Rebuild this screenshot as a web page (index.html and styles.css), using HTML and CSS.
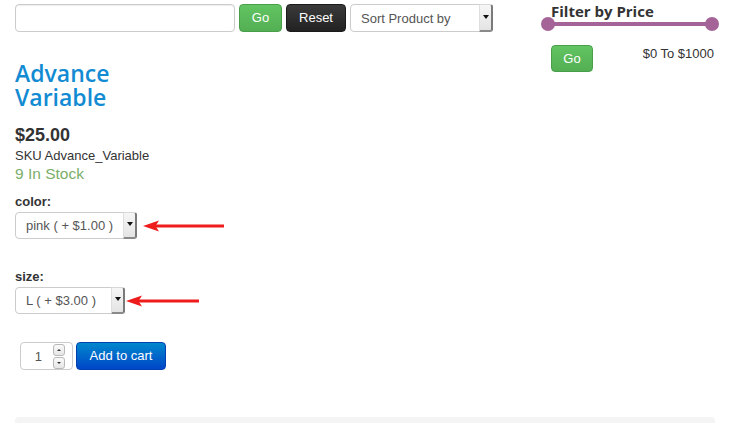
FILE: index.html
```html
<!DOCTYPE html>
<html>
<head>
<meta charset="utf-8">
<title>Advance Variable</title>
<link rel="stylesheet" href="styles.css">
</head>
<body>
<div class="page">
  <div class="main">
    <div class="toolbar">
      <div class="text-input"></div>
      <button class="btn btn-success btn-go">Go</button>
      <button class="btn btn-inverse btn-reset">Reset</button>
      <div class="select select-sort">
        <span class="select-text">Sort Product by</span>
        <span class="select-btn"><span class="caret"></span></span>
      </div>
    </div>

    <h1 class="product-title"><span class="title-line">Advance</span><span class="title-line">Variable</span></h1>
    <div class="price">$25.00</div>
    <div class="sku">SKU Advance_Variable</div>
    <div class="stock">9 In Stock</div>

    <div class="option option-color">
      <div class="option-label">color:</div>
      <div class="option-row">
        <div class="select select-color">
          <span class="select-text">pink ( + $1.00 )</span>
          <span class="select-btn"><span class="caret"></span></span>
        </div>
        <svg class="red-arrow arrow-color" width="82" height="14" viewBox="0 0 82 14">
          <line x1="10" y1="7" x2="81" y2="7" stroke="#ee1c1c" stroke-width="3"/>
          <polygon points="0,7 16,1.5 12.5,7 16,12.5" fill="#ee1c1c"/>
        </svg>
      </div>
    </div>

    <div class="option option-size">
      <div class="option-label">size:</div>
      <div class="option-row">
        <div class="select select-size">
          <span class="select-text">L ( + $3.00 )</span>
          <span class="select-btn"><span class="caret"></span></span>
        </div>
        <svg class="red-arrow arrow-size" width="74" height="14" viewBox="0 0 74 14">
          <line x1="10" y1="7" x2="73" y2="7" stroke="#ee1c1c" stroke-width="3"/>
          <polygon points="0,7 16,1.5 12.5,7 16,12.5" fill="#ee1c1c"/>
        </svg>
      </div>
    </div>

    <div class="cart-row">
      <div class="qty">
        <span class="qty-value">1</span>
        <span class="spinner">
          <span class="spin spin-up"><span class="tri-up"></span></span>
          <span class="spin spin-down"><span class="tri-down"></span></span>
        </span>
      </div>
      <button class="btn btn-primary btn-cart">Add to cart</button>
    </div>
  </div>

  <div class="sidebar">
    <h3 class="filter-title">Filter by Price</h3>
    <div class="slider">
      <span class="handle handle-left"></span>
      <span class="handle handle-right"></span>
    </div>
    <div class="filter-row">
      <button class="btn btn-success btn-filter">Go</button>
      <span class="range">$0 To $1000</span>
    </div>
  </div>

  <div class="well"></div>
</div>
</body>
</html>
```
FILE: styles.css
```css
html, body {
  margin: 0;
  padding: 0;
  background: #fff;
  overflow: hidden;
}
body {
  font-family: "Liberation Sans", Arial, sans-serif;
  font-size: 13px;
  color: #333;
}
.page {
  display: grid;
  grid-template-columns: 533px 167px;
  padding: 4px 14px 0 15px;
  width: 700px;
}
.main {
  display: flex;
  flex-direction: column;
  align-items: flex-start;
}
.toolbar {
  display: flex;
  gap: 4px;
  height: 28px;
}
.text-input {
  width: 220px;
  height: 28px;
  box-sizing: border-box;
  border: 1px solid #ccc;
  border-radius: 4px;
  box-shadow: inset 0 1px 1px rgba(0,0,0,0.075);
  background: #fff;
}
.btn {
  font-family: "Liberation Sans", Arial, sans-serif;
  font-size: 13px;
  color: #fff;
  height: 28px;
  box-sizing: border-box;
  border-radius: 4px;
  padding: 0;
  margin: 0;
  cursor: pointer;
  line-height: 26px;
}
.btn-success {
  background: linear-gradient(#62c462, #53af53);
  border: 1px solid #4a9e4a;
}
.btn-inverse {
  background: linear-gradient(#3a3a3a, #222);
  border: 1px solid #1a1a1a;
}
.btn-primary {
  background: linear-gradient(#0088cc, #0046c8);
  border: 1px solid #0040b0;
}
.btn-go { width: 43px; }
.btn-reset { width: 60px; }

.select {
  display: flex;
  box-sizing: border-box;
  border: 1px solid #ccc;
  border-radius: 4px;
  background: #fff;
  height: 28px;
}
.select-text {
  flex: 1;
  display: flex;
  align-items: center;
  padding-left: 10px;
  color: #555;
  font-size: 13px;
  white-space: nowrap;
}
.select-btn {
  width: 11px;
  margin: -1px -1px -1px 0;
  background: linear-gradient(#f6f6f6, #e4e4e4);
  border-left: 1px solid #dedede;
  border-right: 2px solid #7a7a7a;
  border-bottom: 2px solid #8a8a8a;
  border-top: 1px solid #d8d8d8;
  border-radius: 0 3px 3px 0;
  display: flex;
  align-items: center;
  justify-content: center;
}
.caret {
  width: 0;
  height: 0;
  border-left: 3px solid transparent;
  border-right: 3px solid transparent;
  border-top: 4px solid #111;
  margin-top: -2px;
}
.select-sort { width: 143px; }
.select-color { width: 122px; height: 27px; }
.select-size { width: 110px; height: 27px; }

.product-title {
  font-family: "Open Sans", "DejaVu Sans", sans-serif;
  font-weight: 600;
  font-size: 23px;
  line-height: 24px;
  color: #128bd3;
  margin: 29px 0 0 0;
  display: flex;
  flex-direction: column;
}
.title-line {
  display: block;
  height: 24px;
}
.price {
  font-weight: bold;
  font-size: 18px;
  line-height: 20px;
  margin-top: 16px;
  color: #333;
}
.sku {
  font-size: 13px;
  line-height: 18px;
  margin-top: 2px;
  color: #333;
}
.stock {
  font-size: 15.5px;
  line-height: 18px;
  color: #7aae69;
}
.option-label {
  font-weight: bold;
  font-size: 13px;
  line-height: 18px;
  color: #333;
  margin-bottom: 1px;
}
.option-color { margin-top: 10px; }
.option-size { margin-top: 29px; }
.option-row {
  display: flex;
  align-items: center;
}
.arrow-color { margin-left: 6px; }
.arrow-size { margin-left: 1px; }

.cart-row {
  display: flex;
  gap: 3px;
  margin-top: 28px;
  margin-left: 5px;
}
.qty {
  width: 53px;
  height: 28px;
  box-sizing: border-box;
  border: 1px solid #ccc;
  border-radius: 4px;
  display: flex;
  align-items: center;
  justify-content: flex-end;
  padding-right: 7px;
  gap: 11px;
  background: #fff;
}
.qty-value {
  color: #555;
  font-size: 13px;
}
.spinner {
  display: flex;
  flex-direction: column;
  gap: 1px;
}
.spin {
  width: 10px;
  height: 10px;
  border: 1px solid #b8b8b8;
  border-radius: 3px;
  background: linear-gradient(#fafafa, #e6e6e6);
  display: flex;
  align-items: center;
  justify-content: center;
}
.tri-up {
  width: 0; height: 0;
  border-left: 2px solid transparent;
  border-right: 2px solid transparent;
  border-bottom: 2px solid #333;
}
.tri-down {
  width: 0; height: 0;
  border-left: 2px solid transparent;
  border-right: 2px solid transparent;
  border-top: 2px solid #333;
}
.btn-cart { width: 90px; }

.sidebar {
  display: flex;
  flex-direction: column;
}
.filter-title {
  font-family: "Open Sans", "DejaVu Sans", sans-serif;
  font-weight: bold;
  font-size: 15px;
  line-height: 18px;
  margin: -2px 0 0 3px;
  color: #333;
}
.slider {
  position: relative;
  height: 4px;
  background: #a46497;
  margin-top: 1.5px;
  margin-right: 3px;
  border-radius: 2px;
}
.handle {
  position: absolute;
  top: -5px;
  width: 14px;
  height: 14px;
  border-radius: 50%;
  background: #a46497;
}
.handle-left { left: -7px; }
.handle-right { right: -7px; }
.filter-row {
  display: flex;
  justify-content: space-between;
  align-items: flex-start;
  margin-top: 19.5px;
  padding: 0 1px 0 3px;
}
.btn-filter { width: 42px; height: 27px; line-height: 25px; }
.range {
  font-size: 13px;
  line-height: 16px;
  margin-top: 1px;
  color: #333;
}
.well {
  grid-column: 1 / 3;
  height: 7px;
  margin-top: 47px;
  background: #f4f4f4;
  border-radius: 4px 4px 0 0;
}
```
